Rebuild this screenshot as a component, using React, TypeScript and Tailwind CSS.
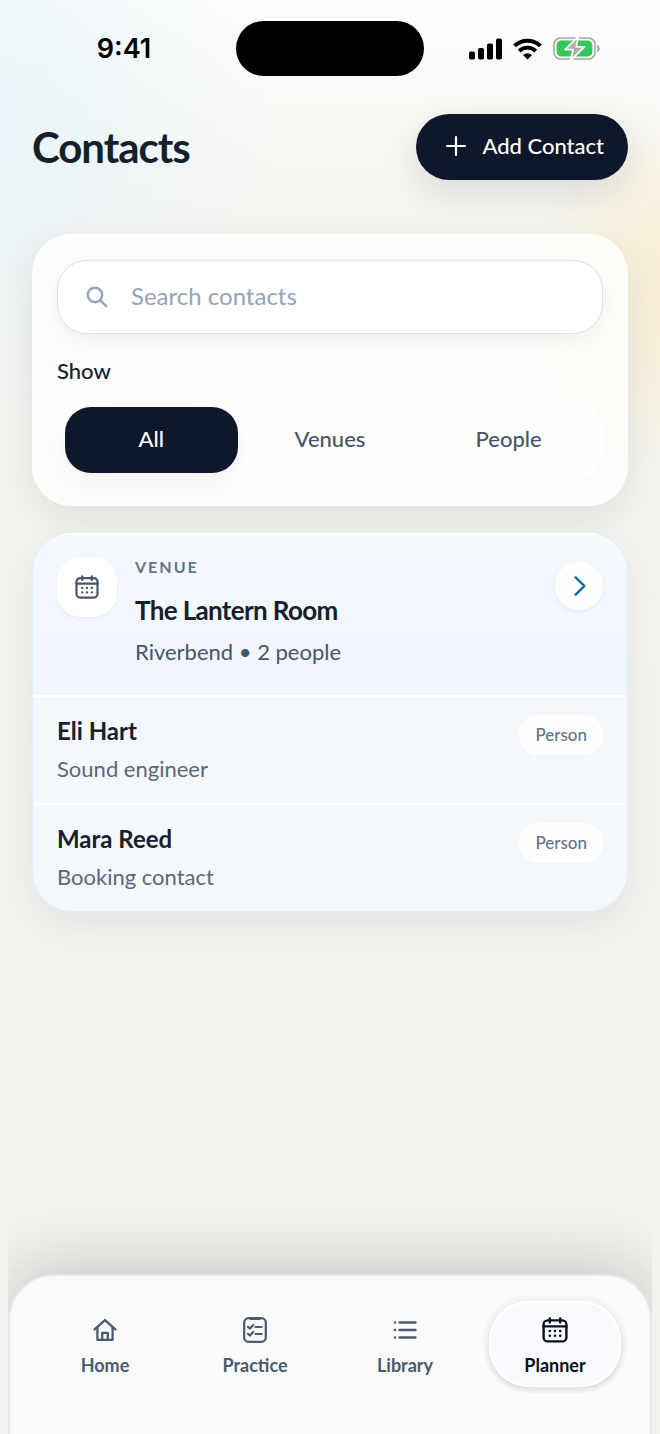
import { useState } from "react";
import type { ReactNode } from "react";

const filters = ["All", "Venues", "People"];

const people = [
  { name: "Eli Hart", role: "Sound engineer" },
  { name: "Mara Reed", role: "Booking contact" },
];

function CalendarIcon({ className }: { className: string }) {
  return (
    <svg className={className} viewBox="0 0 26 26" fill="none" stroke="currentColor" strokeWidth={2.4} strokeLinecap="round" aria-hidden="true">
      <rect x="1.6" y="3.4" width="22.8" height="21" rx="4" />
      <path d="M1.6 9.4h22.8M7.8 1.4v4M18.2 1.4v4" />
      <path strokeWidth={2.6} d="M7.8 14h.01M13 14h.01M18.2 14h.01M7.8 18.8h.01M13 18.8h.01M18.2 18.8h.01" />
    </svg>
  );
}

function HomeIcon() {
  return (
    <svg className="w-[26px] h-[26px]" viewBox="0 0 26 26" fill="none" stroke="currentColor" strokeWidth={2.3} strokeLinecap="round" strokeLinejoin="round" aria-hidden="true">
      <path d="M2.6 12.4L13 3.2l10.4 9.2" />
      <path d="M5.4 10.4v12.4h15.2V10.4" />
      <path d="M10.2 22.6v-6.8h5.6v6.8" />
    </svg>
  );
}

function PracticeIcon() {
  return (
    <svg className="w-[26px] h-[26px]" viewBox="0 0 26 26" fill="none" stroke="currentColor" strokeWidth={2.2} strokeLinecap="round" strokeLinejoin="round" aria-hidden="true">
      <rect x="2.2" y="1.2" width="21.6" height="23.6" rx="4.4" />
      <path d="M8.4 1.9h9.2" />
      <path d="M6 9.8l2 1.8 3.2-3.6M13.4 10h6.2M6 16.8l2 1.8 3.2-3.6M13.4 17h6.2" />
    </svg>
  );
}

function LibraryIcon() {
  return (
    <svg className="w-[26px] h-[26px]" viewBox="0 0 26 26" fill="none" stroke="currentColor" strokeWidth={2.5} strokeLinecap="round" aria-hidden="true">
      <path d="M3 5.6h.01M7.6 5.6h15.8M3 13h.01M7.6 13h15.8M3 20.4h.01M7.6 20.4h15.8" />
    </svg>
  );
}

const tabs: { label: string; icon: ReactNode }[] = [
  { label: "Home", icon: <HomeIcon /> },
  { label: "Practice", icon: <PracticeIcon /> },
  { label: "Library", icon: <LibraryIcon /> },
  { label: "Planner", icon: <CalendarIcon className="w-[26px] h-[26px]" /> },
];

function StatusBar() {
  return (
    <div className="grid grid-cols-[1fr_188px_1fr] items-center pt-[21px]">
      <div className="pl-3 text-center font-['Inter',sans-serif] text-[27px] leading-8 font-semibold text-black">9:41</div>
      <div className="h-[55px] rounded-full bg-black" />
      <div className="flex items-center justify-center gap-[11px] pr-4 text-black">
        <svg className="w-[33px] h-[22px]" viewBox="0 0 33 22" fill="currentColor" aria-hidden="true">
          <rect x="0" y="13.6" width="6" height="8" rx="1.8" />
          <rect x="9" y="10" width="6" height="11.6" rx="1.8" />
          <rect x="18" y="5.4" width="6" height="16.2" rx="1.8" />
          <rect x="27" y="0.6" width="6" height="21" rx="1.8" />
        </svg>
        <svg className="w-[29px] h-[22px]" viewBox="0 0 29 22" aria-hidden="true">
          <g fill="none" stroke="currentColor" strokeWidth={3.9}>
            <path d="M1.6 7.9a18.6 18.6 0 0 1 25.8 0" />
            <path d="M6.2 13a12 12 0 0 1 16.6 0" />
          </g>
          <path fill="currentColor" d="M14.5 21.6l-4.5-4.5a6.6 6.6 0 0 1 9 0z" />
        </svg>
        <svg className="w-[47px] h-[23px]" viewBox="0 0 47 23" aria-hidden="true">
          <rect x="1" y="1" width="41" height="21" rx="6.6" fill="none" stroke="#a9a7a7" strokeWidth={1.6} />
          <path d="M44.2 7.8c3.4 1 3.4 6.4 0 7.4z" fill="#a9a7a7" />
          <rect x="3.6" y="3.6" width="35.8" height="15.8" rx="4.4" fill="#34c759" />
          <path d="M25.2-.4L12 12.6h8L17.6 23.4 31.4 9.8h-8.2z" fill="#b0adad" stroke="#fbfbf9" strokeWidth={1.8} strokeLinejoin="round" />
        </svg>
      </div>
    </div>
  );
}

export default function App() {
  const [filter, setFilter] = useState("All");
  const [query, setQuery] = useState("");
  const [tab, setTab] = useState("Planner");

  return (
    <div className="flex min-h-screen flex-col overflow-hidden bg-[radial-gradient(circle_at_-6%_9%,#e8f4f9_0,#e8f4f900_320px),radial-gradient(circle_at_108%_290px,#f9edcb_0,#f9edcb00_190px),linear-gradient(#fcfcfb_0,#f4f3ef_250px,#f3f2ee_100%)] font-['Lato',sans-serif] text-[#16202a]">
      <StatusBar />

      <header className="mt-[38px] flex items-center justify-between px-8">
        <h1 className="text-[42px] leading-[48px] font-bold tracking-tight">Contacts</h1>
        <button className="flex h-[66px] items-center gap-[14px] rounded-full bg-[#0f172a] pr-6 pb-0.5 pl-7 text-[22px] leading-7 font-medium text-white shadow-[0_12px_36px_rgba(15,23,42,0.12)]">
          <svg className="h-6 w-6" viewBox="0 0 24 24" fill="none" stroke="currentColor" strokeWidth={2.2} strokeLinecap="round" aria-hidden="true">
            <path d="M12 3v18M3 12h18" />
          </svg>
          Add Contact
        </button>
      </header>

      <main className="mt-[54px] flex flex-col gap-[26px] px-8">
        <section className="rounded-[40px] border border-white/80 bg-[#fdfdfb]/90 px-6 pt-[25px] pb-6 shadow-[0_12px_36px_rgba(15,23,42,0.08)]">
          <label className="flex h-[74px] items-center gap-[22px] rounded-[30px] border border-[#dbe0ea] bg-white px-[27px] shadow-[0_8px_24px_rgba(15,23,42,0.05)]">
            <svg className="h-6 w-6 shrink-0 text-[#94a3b8]" viewBox="0 0 24 24" fill="none" stroke="currentColor" strokeWidth={2.4} strokeLinecap="round" aria-hidden="true">
              <circle cx="10" cy="10" r="7.2" />
              <path d="M15.4 15.4l5.8 5.8" />
            </svg>
            <input
              type="text"
              aria-label="Search contacts"
              placeholder="Search contacts"
              value={query}
              onChange={(e) => setQuery(e.target.value)}
              className="min-w-0 flex-1 bg-transparent pb-0.5 text-2xl leading-8 outline-none placeholder:text-[#94a3b8]"
            />
          </label>

          <div id="show-label" className="mt-[23px] text-[22px] leading-7 font-medium">Show</div>

          <div role="group" aria-labelledby="show-label" className="mt-[14px] grid grid-cols-3 gap-1.5 rounded-[32px] border-2 border-white bg-white/60 p-1.5">
            {filters.map((f) => (
              <button
                key={f}
                aria-pressed={filter === f}
                onClick={() => setFilter(f)}
                className={`h-[66px] rounded-[26px] pb-0.5 text-[22px] leading-7 font-medium ${
                  filter === f ? "bg-[#0f172a] text-white shadow-[0_8px_28px_rgba(15,23,42,0.06)]" : "text-[#475569]"
                }`}
              >
                {f}
              </button>
            ))}
          </div>
        </section>

        <section className="overflow-hidden rounded-[40px] border border-[#dcefff] bg-[#f4f8fd] shadow-[0_12px_36px_rgba(50,100,120,0.09)]">
          <div className="flex items-start gap-[18px] border-b-2 border-white bg-linear-to-b from-[#f5f9fe] to-[#f0f5fe] px-6 pt-6 pb-[27px] shadow-[inset_0_2px_0_#ffffff]">
            <div className="flex h-[60px] w-[60px] items-center justify-center rounded-3xl bg-white text-[#475569] shadow-[0_2px_4px_rgba(15,23,42,0.05)]">
              <CalendarIcon className="h-6 w-6" />
            </div>
            <div className="flex-1">
              <div className="text-base leading-5 font-bold tracking-[2px] text-[#64748b]">VENUE</div>
              <h2 className="mt-[15px] text-[26px] leading-9 font-bold tracking-tight">The Lantern Room</h2>
              <p className="mt-2 text-[22px] leading-8 text-[#475569]">Riverbend • 2 people</p>
            </div>
            <button aria-label="Open venue" className="mt-[5px] flex h-12 w-12 items-center justify-center rounded-full bg-white/90 text-[#0369a1] shadow-[0_2px_4px_rgba(15,23,42,0.06)]">
              <svg className="h-6 w-6" viewBox="0 0 24 24" fill="none" stroke="currentColor" strokeWidth={2.4} strokeLinecap="round" strokeLinejoin="round" aria-hidden="true">
                <path d="M8.6 3.4l8.8 8.6-8.8 8.6" />
              </svg>
            </button>
          </div>

          {people.map((person) => (
            <div key={person.name} className="flex items-start justify-between border-b-2 border-white/60 px-6 pt-4 pb-[18px] last:border-b-0">
              <div>
                <h3 className="text-2xl leading-9 font-bold">{person.name}</h3>
                <p className="mt-1 text-[22px] leading-8 text-[#5b677a]">{person.role}</p>
              </div>
              <span className="mt-0.5 rounded-full bg-white/90 px-4 py-2 text-[17px] leading-6 font-medium text-[#64748b]">Person</span>
            </div>
          ))}
        </section>
      </main>

      {/* keeps the bar's shadow inside its own column */}
      <div className="mx-2 mt-auto overflow-hidden pt-24">
        <nav className="flex rounded-t-[46px] border-2 border-b-0 border-[#e6e7ea] bg-[#f9fbfa] px-5 pt-[25px] pb-[47px] shadow-[0_-10px_60px_rgba(30,30,40,0.2)]">
          {tabs.map((t) => (
            <a
              key={t.label}
              href={`#${t.label.toLowerCase()}`}
              aria-current={tab === t.label ? "page" : undefined}
              onClick={() => setTab(t.label)}
              className={`mx-[9px] flex h-[86px] flex-1 flex-col items-center gap-2.5 rounded-[40px] pt-4 text-lg font-bold ${
                tab === t.label
                  ? "bg-[#f8f9fc] text-[#0b1020] shadow-[inset_0_0_0_2px_#ffffff,0_2px_5px_rgba(15,23,42,0.14),0_0_0_6px_rgba(15,23,42,0.025)]"
                  : "text-[#4b5a70]"
              }`}
            >
              {t.icon}
              <span className="leading-6">{t.label}</span>
            </a>
          ))}
        </nav>
      </div>
    </div>
  );
}
